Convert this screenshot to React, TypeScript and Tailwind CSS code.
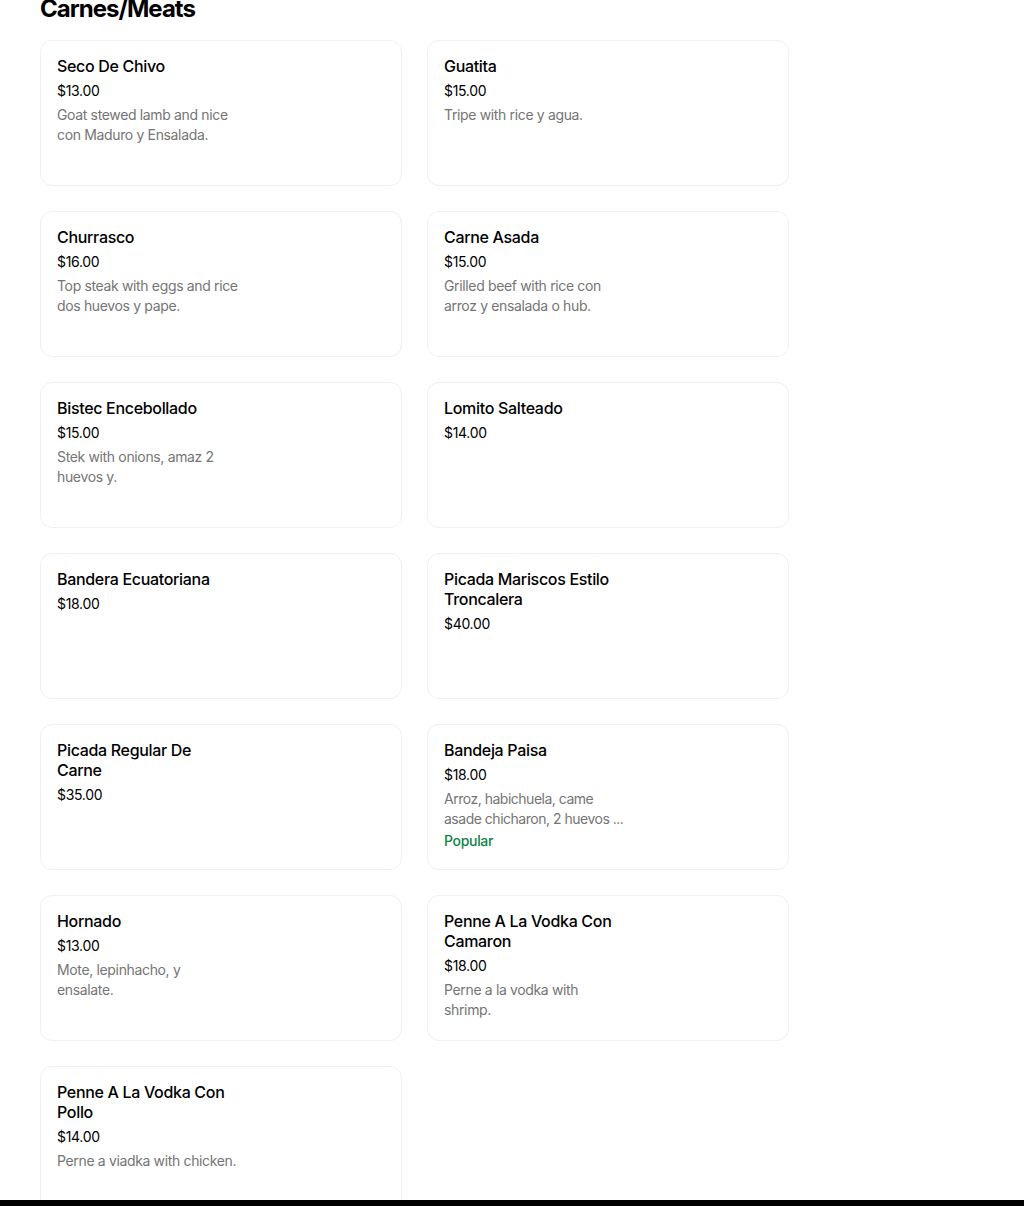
type Item = {
  name: string
  price: string
  desc?: string
  popular?: boolean
}

const items: Item[] = [
  { name: "Seco De Chivo", price: "$13.00", desc: "Goat stewed lamb and nice con Maduro y Ensalada." },
  { name: "Guatita", price: "$15.00", desc: "Tripe with rice y agua." },
  { name: "Churrasco", price: "$16.00", desc: "Top steak with eggs and rice dos huevos y pape." },
  { name: "Carne Asada", price: "$15.00", desc: "Grilled beef with rice con arroz y ensalada o hub." },
  { name: "Bistec Encebollado", price: "$15.00", desc: "Stek with onions, amaz 2 huevos y." },
  { name: "Lomito Salteado", price: "$14.00" },
  { name: "Bandera Ecuatoriana", price: "$18.00" },
  { name: "Picada Mariscos Estilo Troncalera", price: "$40.00" },
  { name: "Picada Regular De Carne", price: "$35.00" },
  {
    name: "Bandeja Paisa",
    price: "$18.00",
    desc: "Arroz, habichuela, came asade chicharon, 2 huevos\u00a0...",
    popular: true,
  },
  { name: "Hornado", price: "$13.00", desc: "Mote, lepinhacho, y ensalate." },
  { name: "Penne A La Vodka Con Camaron", price: "$18.00", desc: "Perne a la vodka with shrimp." },
  { name: "Penne A La Vodka Con Pollo", price: "$14.00", desc: "Perne a viadka with chicken." },
]

function MenuCard({ item }: { item: Item }) {
  return (
    <div className="h-[146px] rounded-xl border border-[#f0f0f0] bg-white px-4 pt-[15px]">
      <div className="flex w-[184px] flex-col tracking-[-0.02em]">
        <h3 className="pr-2 text-base font-medium leading-5 text-black">{item.name}</h3>
        <p className="mt-[5px] text-sm leading-5 text-black">{item.price}</p>
        {item.desc && (
          <p
            className={
              item.popular
                ? "mt-1 w-[182px] text-sm leading-5 tracking-[-0.035em] text-[#757575]"
                : "mt-1 w-[182px] text-sm leading-5 tracking-[-0.025em] text-[#757575]"
            }
          >
            {item.desc}
          </p>
        )}
        {item.popular && (
          <span className="mt-[2px] text-sm font-medium leading-5 text-[#0e8345]">Popular</span>
        )}
      </div>
    </div>
  )
}

export default function App() {
  return (
    <div className="min-h-screen bg-white font-['Inter',sans-serif]">
      <div className="h-[1200px] overflow-hidden">
        <div className="-mt-[7px] px-10">
          {/* Section heading */}
          <h2 className="mb-[15px] text-2xl font-bold leading-8 tracking-[-0.04em] text-black">Carnes/Meats</h2>
          <div className="grid grid-cols-[362px_362px] gap-[25px]">
            {items.map((item) => (
              <MenuCard key={item.name} item={item} />
            ))}
          </div>
        </div>
      </div>
      <div className="h-10 bg-black" />
    </div>
  )
}
